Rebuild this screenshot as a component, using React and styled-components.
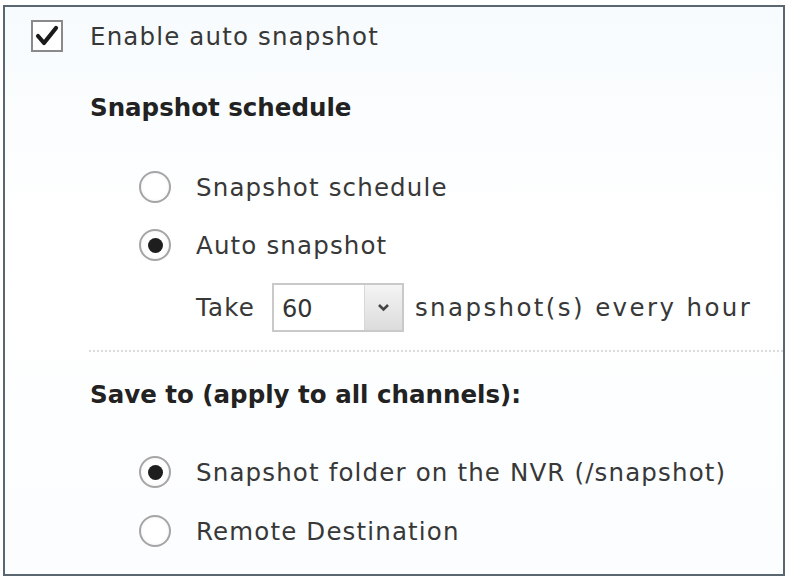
import React from 'react'
import styled, {createGlobalStyle} from 'styled-components'

const Global = createGlobalStyle`
  html, body {
    margin: 0;
    padding: 0;
    background: #ffffff;
  }
  body {
    font-family: 'DejaVu Sans', Verdana, sans-serif;
    color: #333;
  }
`

const Frame = styled.div`
  width: 787px;
  height: 578px;
  padding: 5px 2px 2px 3px;
  box-sizing: border-box;
`

const Panel = styled.div`
  height: 100%;
  box-sizing: border-box;
  border: 2px solid #5b6770;
  background: linear-gradient(#f7fbfd, #ffffff 40%, #fbfdfe);
  padding: 13px 0 0 26px;
  display: flex;
  flex-direction: column;
`

const Row = styled.div`
  display: flex;
  align-items: center;
  height: 32px;
  margin-top: ${p => p.top || 0}px;
  padding-left: ${p => p.indent || 0}px;
  gap: ${p => p.gap || 0}px;
`

const Label = styled.span`
  font-size: 24.5px;
  letter-spacing: ${p => (p.wide ? 2.4 : 1.15)}px;
  margin-left: ${p => p.shift || 0}px;
  color: #383838;
  white-space: nowrap;
`

const Heading = styled.span`
  font-size: 24.5px;
  font-weight: bold;
  color: #222;
  white-space: nowrap;
`

const Box = styled.span`
  width: 32px;
  height: 32px;
  box-sizing: border-box;
  border: 2px solid #8a8a8a;
  background: #fff;
  display: flex;
  align-items: center;
  justify-content: center;
`

const Radio = styled.span`
  width: 32px;
  height: 32px;
  box-sizing: border-box;
  border-radius: 50%;
  border: 2px solid #a5a5a5;
  background: radial-gradient(circle, #fff 55%, #eeeeee);
  display: flex;
  align-items: center;
  justify-content: center;
  flex-shrink: 0;

  &::after {
    content: '';
    width: 15px;
    height: 15px;
    border-radius: 50%;
    background: ${p => (p.checked ? '#1e1e1e' : 'transparent')};
  }
`

const Select = styled.span`
  width: 132px;
  height: 49px;
  box-sizing: border-box;
  border: 2px solid #c9c9c9;
  display: flex;
  background: #fff;
  flex-shrink: 0;
  margin-left: 4px;
`

const SelectValue = styled.span`
  flex: 1;
  font-size: 24px;
  color: #333;
  padding-left: 8px;
  display: flex;
  align-items: center;
  padding-top: 4px;
`

const SelectButton = styled.span`
  width: 37px;
  border-left: 1px solid #d8d8d8;
  background: linear-gradient(#f4f4f4, #dcdcdc);
  display: flex;
  align-items: center;
  justify-content: center;
`

const Divider = styled.div`
  margin: 27px 0 0 58px;
  border-top: 2px dotted #dcdcdc;
`

const Check = () => (
  <svg width='24' height='22' viewBox='0 0 24 22'>
    <path d='M3 11 L9 18 L21 3' fill='none' stroke='#1a1a1a' strokeWidth='4.2' strokeLinecap='round' strokeLinejoin='round'/>
  </svg>
)

const Chevron = () => (
  <svg width='13' height='9' viewBox='0 0 13 9'>
    <path d='M2 2 L6.5 6.5 L11 2' fill='none' stroke='#444' strokeWidth='2.6'/>
  </svg>
)

const App = () => (
  <Frame>
    <Global/>
    <Panel>
      <Row gap={27}>
        <Box><Check/></Box>
        <Label>Enable auto snapshot</Label>
      </Row>

      <Row top={39} indent={59}>
        <Heading>Snapshot schedule</Heading>
      </Row>

      <Row top={48} indent={108} gap={25}>
        <Radio/>
        <Label>Snapshot schedule</Label>
      </Row>
      <Row top={26} indent={108} gap={25}>
        <Radio checked/>
        <Label>Auto snapshot</Label>
      </Row>
      <Row top={30} indent={165} gap={13}>
        <Label>Take</Label>
        <Select>
          <SelectValue>60</SelectValue>
          <SelectButton><Chevron/></SelectButton>
        </Select>
        <Label wide shift={-2}>snapshot(s) every hour</Label>
      </Row>

      <Divider/>

      <Row top={26} indent={59}>
        <Heading>Save to (apply to all channels):</Heading>
      </Row>

      <Row top={46} indent={108} gap={25}>
        <Radio checked/>
        <Label>Snapshot folder on the NVR (/snapshot)</Label>
      </Row>
      <Row top={27} indent={108} gap={25}>
        <Radio/>
        <Label>Remote Destination</Label>
      </Row>
    </Panel>
  </Frame>
)

export default App
